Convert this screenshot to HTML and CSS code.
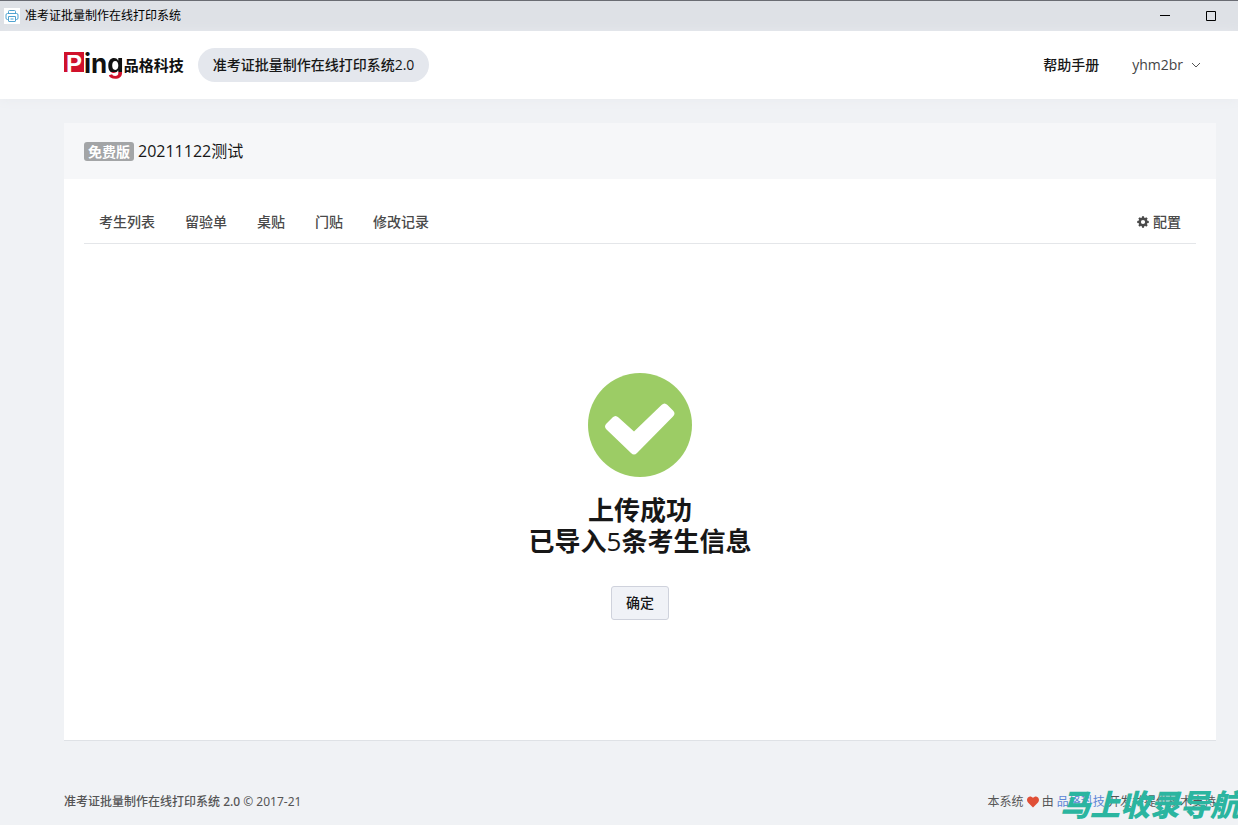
FILE: index.html
```html
<!DOCTYPE html>
<html lang="zh-CN">
<head>
<meta charset="utf-8">
<meta name="viewport" content="width=device-width, initial-scale=1">
<title>准考证批量制作在线打印系统</title>
<link rel="stylesheet" href="styles.css">
</head>
<body>
<div class="window">
  <div class="titlebar">
    <svg class="app-icon" viewBox="0 0 16 16" fill="none" stroke="#4fa3d1" aria-hidden="true">
      <rect width="16" height="16" fill="#fff" stroke="none"/>
      <path d="M4.500 5V3.500q0-1 1-1h5q1 0 1 1V5M4.500 11.500h-1q-1.500 0-1.500-1.500V7q0-1.500 1.500-1.500h9Q14 5.500 14 7v3q0 1.500-1.500 1.500h-1M4.500 8.500h7V13q0 .5-.5.5H5q-.5 0-.5-.5zM6.500 11h3"/>
    </svg>
    <span class="window-title">准考证批量制作在线打印系统</span>
    <button class="window-button" type="button" aria-label="最小化"><svg viewBox="0 0 10 10" stroke="#000" fill="none"><path d="M0 4.500h10"/></svg></button>
    <button class="window-button" type="button" aria-label="最大化"><svg viewBox="0 0 10 10" stroke="#000" fill="none"><path d="M.5.5h9v9h-9z"/></svg></button>
  </div>

  <header class="header">
    <a class="logo" href="#">
      <span class="logo-mark">P</span><span class="logo-ing">in<span class="logo-g">g</span></span><span class="logo-name">品格科技</span>
    </a>
    <a class="product" href="#">准考证批量制作在线打印系统2.0</a>
    <nav class="header-nav">
      <a class="help" href="#">帮助手册</a>
      <button class="user" type="button">yhm2br
        <svg class="chevron" viewBox="0 0 10 10" fill="none" stroke="#555"><path d="M1 3l4 4 4-4"/></svg>
      </button>
    </nav>
  </header>

  <main class="main">
    <section class="card">
      <div class="card-header"><span class="badge">免费版</span><h1 class="card-title">20211122测试</h1></div>
      <div class="card-body">
        <nav class="tabs">
          <a class="tab" href="#">考生列表</a>
          <a class="tab" href="#">留验单</a>
          <a class="tab" href="#">桌贴</a>
          <a class="tab" href="#">门贴</a>
          <a class="tab" href="#">修改记录</a>
          <a class="tab tab-config" href="#">
            <svg class="gear" viewBox="0 0 512 512" fill="currentColor" aria-hidden="true"><path fill-rule="evenodd" d="M214 10h84l12 62 34 14 52-35 60 60-35 52 14 34 67 17v84l-67 12-14 34 35 52-60 60-52-35-34 14-12 67h-84l-12-67-34-14-52 35-60-60 35-52-14-34-67-12v-84l67-17 14-34-35-52 60-60 52 35 34-14zM256 166a90 90 0 1 0 0 180 90 90 0 0 0 0-180z"/></svg>
            配置</a>
        </nav>
        <div class="result">
          <svg class="check" viewBox="0 0 104 104" aria-hidden="true">
            <circle cx="52" cy="52" r="52" fill="#9ccc65"/>
            <path d="M18.500 50.500l6-6q3-3 6 0L46 58.500 73.500 32q3-3 6 0l5.500 5.500q3 3 0 6L49 80q-3 3-6 0L18.500 56.500q-3-3 0-6z" fill="#fff"/>
          </svg>
          <h2 class="result-title">上传成功<br>已导入<span class="count">5</span>条考生信息</h2>
          <button class="confirm" type="button">确定</button>
        </div>
      </div>
    </section>
  </main>

  <footer class="footer">
    <p class="copyright"><strong class="system">准考证批量制作在线打印系统 <span class="latin">2.0</span></strong> <span class="latin">© 2017-21</span></p>
    <p class="credit">本系统
      <svg class="heart" viewBox="0 0 12 12" fill="#e04f36" role="img" aria-label="爱心"><path d="M6 11.500L1 6.500C-.5 4.800-.2 2.300 1.300 1.200 2.800.1 4.800.6 6 2.100 7.200.6 9.200.1 10.700 1.200c1.500 1.100 1.800 3.600.3 5.300z"/></svg>
      由 <a class="company" href="#">品格科技</a> 开发并提供技术支持</p>
  </footer>
  <div class="watermark">马上收录导航</div>
</div>
</body>
</html>
```
FILE: styles.css
```css
* { box-sizing: border-box; }

body {
  margin: 0;
  background: #f0f2f5;
  color: #171717;
  font: 14px/20px "Open Sans", "Noto Sans CJK SC", sans-serif;
}

a { color: inherit; text-decoration: none; }
button { font: inherit; color: inherit; }
p, h1, h2 { margin: 0; }

.window {
  position: relative;
  display: flex;
  flex-direction: column;
  min-height: 100vh;
  overflow: hidden;
}

.titlebar {
  display: flex;
  align-items: center;
  height: 31px;
  padding-left: 4px;
  border-top: 1px solid #6a6c73;
  background: #dee1e6;
  color: #000;
  font-size: 12px;
}
.app-icon { width: 16px; height: 16px; margin-right: 5px; }
.window-title { margin-right: auto; }
.window-button {
  display: flex;
  align-items: center;
  justify-content: center;
  width: 46px;
  height: 28px;
  padding: 0;
  border: 0;
  background: none;
}
.window-button:last-child { margin-right: 4px; }
.window-button svg { width: 10px; height: 10px; }

.header {
  display: flex;
  align-items: center;
  height: 68px;
  padding: 0 37px 0 64px;
  background: #fff;
  box-shadow: 0 1px 10px #e9ebef;
}
.logo {
  display: flex;
  align-items: center;
  height: 34px;
  color: #111;
  font-weight: 700;
}
.logo-mark {
  width: 20px;
  height: 20px;
  margin-bottom: 6px;
  background: #d0112b;
  color: #fff;
  font: 700 24px/24px "Liberation Sans", sans-serif;
  text-align: center;
}
.logo-ing { font: 700 26px/26px Inter, sans-serif; margin-bottom: 3px; }
.logo-g {
  background: linear-gradient(#111 79%, #d0112b 79%);
  background-clip: text;
  -webkit-background-clip: text;
  color: transparent;
}
.logo-name { font-size: 15px; }
.product {
  margin-left: 14px;
  padding: 7px 15px;
  border-radius: 17px;
  background: #e4e7ed;
  font-weight: 500;
}
.header-nav { display: flex; align-items: center; gap: 33px; margin-left: auto; }
.help { font-weight: 500; }
.user {
  display: flex;
  align-items: center;
  gap: 8px;
  padding: 0;
  border: 0;
  background: none;
  color: #444;
}
.chevron { width: 10px; height: 10px; }

.main {
  display: flex;
  flex: 1;
  padding: 24px 22px 0 64px;
}
.card {
  display: flex;
  flex: 1;
  flex-direction: column;
  background: #fff;
  border-bottom: 1px solid #dfe2e6;
}
.card-header {
  display: flex;
  align-items: center;
  gap: 4px;
  height: 56px;
  padding: 0 20px;
  background: #f6f7f9;
}
.badge {
  padding: 0 4px;
  border-radius: 3px;
  background: #a3a5a7;
  color: #fff;
  font-size: 14px;
  font-weight: 700;
  line-height: 19px;
}
.card-title { font-size: 16px; font-weight: 400; }
.card-body {
  display: flex;
  flex: 1;
  flex-direction: column;
  padding: 20px;
}
.tabs {
  display: flex;
  border-bottom: 1px solid #e4e6e9;
  color: #4a4a4a;
  font-weight: 500;
}
.tab { padding: 13px 15px 11px; }
.tab-config { display: flex; align-items: center; gap: 4px; margin-left: auto; }
.gear { width: 12px; height: 12px; }

.result {
  display: flex;
  flex: 1;
  flex-direction: column;
  align-items: center;
  justify-content: center;
  padding-top: 29px;
}
.check { width: 104px; height: 104px; }
.result-title {
  margin: 18px 0 29px;
  font-size: 26px;
  font-weight: 700;
  line-height: 31px;
  text-align: center;
}
.count { font-weight: 400; }
.confirm {
  padding: 6px 14px;
  border: 1px solid #cfd2dc;
  border-radius: 3px;
  background: #f0f2f7;
  font-weight: 500;
}

.footer {
  display: flex;
  align-items: center;
  justify-content: space-between;
  height: 84px;
  padding: 38px 22px 0 64px;
  color: #555;
  font-size: 12px;
}
.system { font-weight: 500; }
.latin { font-family: "Noto Sans", sans-serif; }
.heart { width: 12px; height: 12px; vertical-align: -2px; }
.company { color: #5c86d6; }

.watermark {
  position: absolute;
  right: -2px;
  bottom: 7px;
  color: #2bb5a0;
  font-family: "Noto Sans CJK SC", sans-serif;
  font-size: 30px;
  font-style: italic;
  font-weight: 900;
  line-height: 30px;
  white-space: nowrap;
}
```
